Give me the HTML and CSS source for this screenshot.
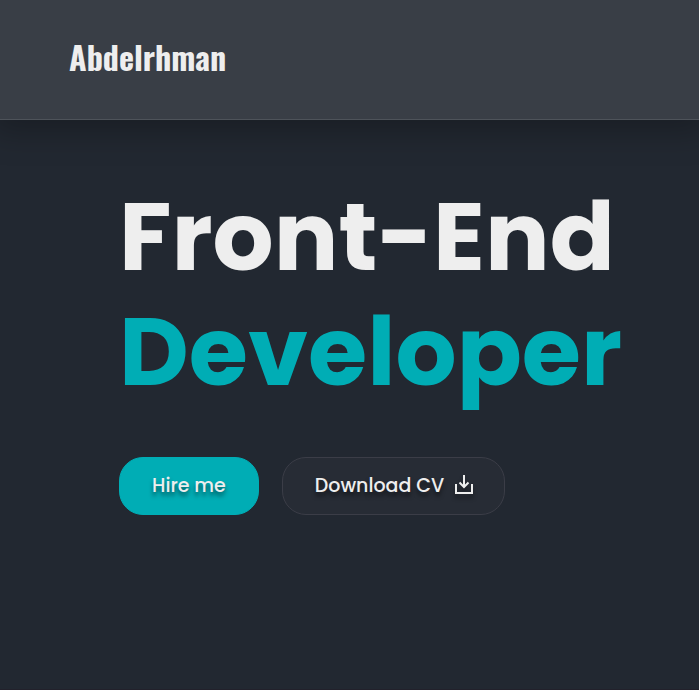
FILE: index.html
```html
<!DOCTYPE html>
<html lang="en">
<head>
<meta charset="utf-8">
<meta name="viewport" content="width=device-width, initial-scale=1">
<title>Abdelrhman</title>
<link rel="stylesheet" href="styles.css">
</head>
<body>
<header class="site-header">
  <a class="logo" href="#">Abdelrhman</a>
</header>
<main class="hero">
  <h1 class="title">Front-End <span class="title-accent">Developer</span></h1>
  <div class="actions">
    <button class="btn btn-primary" type="button">Hire me</button>
    <button class="btn btn-ghost" type="button">Download CV
      <svg class="icon" viewBox="0 0 20 20" aria-hidden="true"><path d="M2 9v9h16V9M10 0v12"/><path d="M5.500 7.500L10 12l4.500-4.500"/></svg>
    </button>
  </div>
</main>
</body>
</html>
```
FILE: styles.css
```css
* {
  box-sizing: border-box;
}

body {
  margin: 0;
  min-height: 100vh;
  display: flex;
  flex-direction: column;
  background: #222831;
  color: #eeeeee;
  font-family: Poppins, Inter, sans-serif;
}

.site-header {
  display: flex;
  align-items: center;
  min-height: 120px;
  padding: 0 69px 6px;
  background: #393e46;
  border-bottom: 1px solid #4e535a;
  box-shadow: 0 4px 30px 8px rgba(0, 0, 0, 0.25);
}

.logo {
  color: inherit;
  font-family: Oswald, "Liberation Sans Narrow", sans-serif;
  font-size: 32px;
  font-weight: 700;
  text-decoration: none;
}

.hero {
  flex: 1;
  padding: 59px 48px 48px 119px;
  border-bottom: 1px solid #22212b;
}

.title {
  margin: 0 0 48px;
  font-size: 96px;
  font-weight: 700;
  line-height: 115px;
}

.title-accent {
  display: block;
  color: #00adb5;
}

.actions {
  display: flex;
  flex-wrap: wrap;
  gap: 23px;
}

.btn {
  display: inline-flex;
  align-items: center;
  gap: 10px;
  min-height: 58px;
  padding: 0 32px 2px;
  border: 1px solid transparent;
  border-radius: 24px;
  color: inherit;
  font-family: inherit;
  font-size: 19px;
  font-weight: 500;
  text-shadow: 0 4px 4px rgba(0, 0, 0, 0.5);
}

.btn-primary {
  background: #00adb5;
  border-color: #00adb5;
}

.btn-ghost {
  padding-right: 30px;
  background: #272c35;
  border-color: #3b3d47;
}

.icon {
  width: 20px;
  height: 20px;
  fill: none;
  stroke: currentColor;
  stroke-width: 2;
  filter: drop-shadow(0 4px 2px rgba(0, 0, 0, 0.4));
}
```
